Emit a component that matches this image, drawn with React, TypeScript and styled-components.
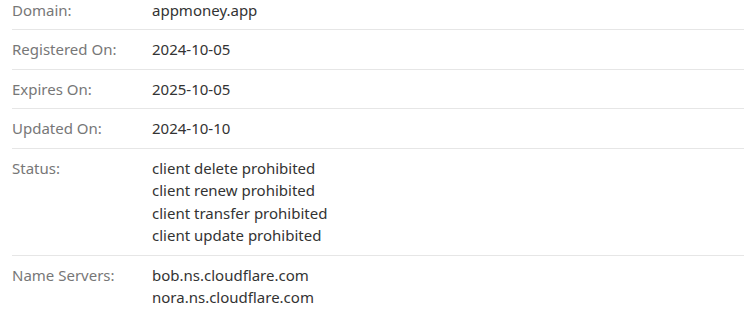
import React from "react";
import styled, { createGlobalStyle } from "styled-components";

const GlobalStyle = createGlobalStyle`
  html, body {
    margin: 0;
    padding: 0;
    background: #fff;
  }
  body {
    font-family: "Noto Sans", "Open Sans", sans-serif;
    font-size: 15px;
    line-height: 1.5;
  }
`;

const Table = styled.div`
  margin-top: -9.5px;
  padding-left: 12px;
  overflow: hidden;
  height: 326px;
`;

const Row = styled.div`
  display: grid;
  grid-template-columns: 140px 1fr;
  padding: 8px 0;
  border-bottom: 1px solid #e6e6e6;
`;

const Label = styled.div`
  color: #777;
`;

const Values = styled.div`
  color: #333;
  display: flex;
  flex-direction: column;
`;

interface Entry {
  label: string;
  values: string[];
}

const entries: Entry[] = [
  { label: "Domain:", values: ["appmoney.app"] },
  { label: "Registered On:", values: ["2024-10-05"] },
  { label: "Expires On:", values: ["2025-10-05"] },
  { label: "Updated On:", values: ["2024-10-10"] },
  {
    label: "Status:",
    values: [
      "client delete prohibited",
      "client renew prohibited",
      "client transfer prohibited",
      "client update prohibited",
    ],
  },
  {
    label: "Name Servers:",
    values: ["bob.ns.cloudflare.com", "nora.ns.cloudflare.com"],
  },
];

export default function App() {
  return (
    <>
      <GlobalStyle />
      <Table>
        {entries.map((entry) => (
          <Row key={entry.label}>
            <Label>{entry.label}</Label>
            <Values>
              {entry.values.map((v) => (
                <span key={v}>{v}</span>
              ))}
            </Values>
          </Row>
        ))}
      </Table>
    </>
  );
}
